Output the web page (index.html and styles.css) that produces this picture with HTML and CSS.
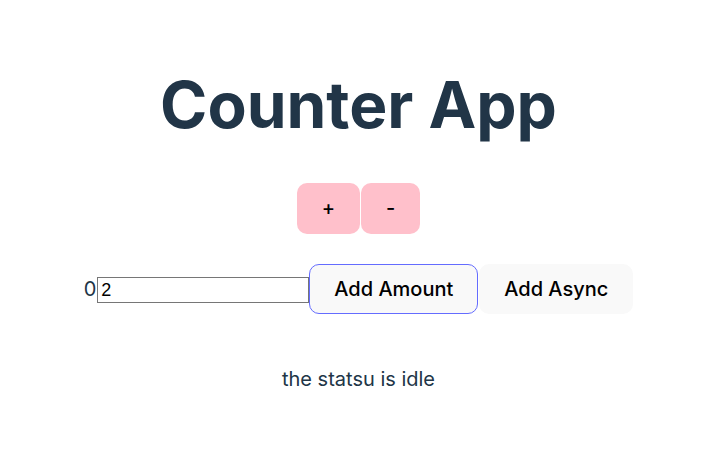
FILE: index.html
```html
<!DOCTYPE html>
<html lang="en">
<head>
<meta charset="utf-8">
<title>Counter App</title>
<link rel="stylesheet" href="styles.css">
</head>
<body>
<div class="app">
  <h1 class="title">Counter App</h1>
  <div class="row">
    <button class="btn pink">+</button>
    <button class="btn pink">-</button>
  </div>
  <div class="row row-amount">
    <span class="count">0</span>
    <input class="amount" type="text" value="2">
    <button class="btn focused">Add Amount</button>
    <button class="btn">Add Async</button>
  </div>
  <p class="status">the statsu is idle</p>
</div>
</body>
</html>
```

FILE: styles.css
```css
html, body {
  margin: 0;
  padding: 0;
  background: #ffffff;
}
body {
  font-family: Inter, "Noto Sans", sans-serif;
  font-size: 20px;
  line-height: 1.5;
  color: #213547;
}
.app {
  display: flex;
  flex-direction: column;
  align-items: center;
  padding: 70px 0 0 13px;
}
.title {
  margin: 0 0 43px;
  font-size: 64px;
  line-height: 1.1;
  font-weight: 700;
}
.row {
  display: flex;
  align-items: center;
  gap: 1px;
}
.row-amount {
  margin-top: 30px;
  gap: 0;
}
.btn {
  font-family: inherit;
  font-size: 20px;
  font-weight: 500;
  line-height: normal;
  padding: 12px 24px;
  border-radius: 10px;
  border: 1px solid transparent;
  background: #f9f9f9;
  color: #000;
  cursor: pointer;
}
.pink {
  background: #ffc0cb;
  padding-top: 12px;
  padding-bottom: 13px;
}
.focused {
  border-color: #646cff;
}
.row-amount .btn + .btn {
  margin-left: 1px;
}
.count {
  font-size: 20px;
  line-height: 26px;
  margin-right: 1px;
}
.amount {
  box-sizing: border-box;
  width: 212px;
  height: 26px;
  margin: 2px 0 0;
  padding: 1px 3px;
  border: 1px solid #767676;
  font-family: "Liberation Sans", Arial, sans-serif;
  font-size: 18px;
  color: #000;
  background: #fff;
}
.status {
  margin: 50px 0 0;
  font-size: 20px;
  line-height: 30px;
}
```
